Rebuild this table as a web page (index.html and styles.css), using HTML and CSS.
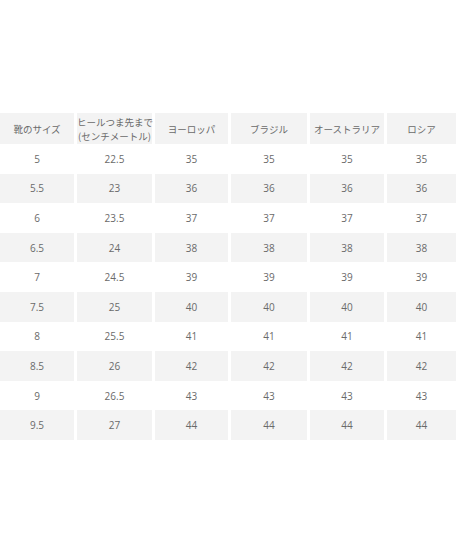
FILE: index.html
```html
<!DOCTYPE html>
<html lang="ja">
<head>
<meta charset="utf-8">
<link rel="stylesheet" href="styles.css">
</head>
<body>
<table class="size-table">
  <colgroup>
    <col class="c1"><col class="c2"><col class="c3"><col class="c4"><col class="c5"><col class="c6">
  </colgroup>
  <thead>
    <tr class="head">
      <th>靴のサイズ</th>
      <th>ヒールつま先まで<br>(センチメートル)</th>
      <th>ヨーロッパ</th>
      <th>ブラジル</th>
      <th>オーストラリア</th>
      <th>ロシア</th>
    </tr>
  </thead>
  <tbody>
    <tr><td>5</td><td>22.5</td><td>35</td><td>35</td><td>35</td><td>35</td></tr>
    <tr class="alt"><td>5.5</td><td>23</td><td>36</td><td>36</td><td>36</td><td>36</td></tr>
    <tr><td>6</td><td>23.5</td><td>37</td><td>37</td><td>37</td><td>37</td></tr>
    <tr class="alt"><td>6.5</td><td>24</td><td>38</td><td>38</td><td>38</td><td>38</td></tr>
    <tr><td>7</td><td>24.5</td><td>39</td><td>39</td><td>39</td><td>39</td></tr>
    <tr class="alt"><td>7.5</td><td>25</td><td>40</td><td>40</td><td>40</td><td>40</td></tr>
    <tr><td>8</td><td>25.5</td><td>41</td><td>41</td><td>41</td><td>41</td></tr>
    <tr class="alt"><td>8.5</td><td>26</td><td>42</td><td>42</td><td>42</td><td>42</td></tr>
    <tr><td>9</td><td>26.5</td><td>43</td><td>43</td><td>43</td><td>43</td></tr>
    <tr class="alt"><td>9.5</td><td>27</td><td>44</td><td>44</td><td>44</td><td>44</td></tr>
  </tbody>
</table>
</body>
</html>
```
FILE: styles.css
```css
html, body {
  margin: 0;
  padding: 0;
  background: #ffffff;
}
body {
  font-family: "Open Sans", "Noto Sans CJK JP", sans-serif;
  font-size: 10px;
  color: #6a6a6a;
}
.size-table {
  margin-top: 113px;
  margin-left: -3px;
  border-collapse: separate;
  border-spacing: 3px 0;
  table-layout: fixed;
  width: 462px;
}
.c1 { width: 74px; }
.c2 { width: 75px; }
.c3 { width: 73px; }
.c4 { width: 76px; }
.c5 { width: 74px; }
.c6 { width: 69px; }
.size-table th,
.size-table td {
  padding: 0;
  text-align: center;
  vertical-align: middle;
  font-weight: normal;
  white-space: nowrap;
}
.size-table th {
  height: 31px;
  line-height: 14px;
  font-family: "Noto Sans CJK JP", sans-serif;
  font-size: 9.5px;
  background: #f3f3f3;
}
.size-table td {
  height: 29.6px;
}
.size-table .alt td {
  background: #f3f3f3;
}
```
